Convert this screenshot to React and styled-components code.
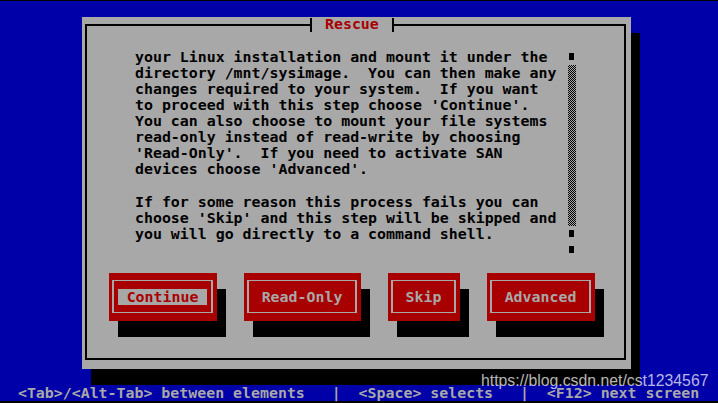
import React from 'react';
import styled, { createGlobalStyle } from 'styled-components';

const C = { blue: '#0000a8', grey: '#a8a8a8', red: '#a80000', black: '#000000' };
const MONO = '"DejaVu Sans Mono", "Liberation Mono", monospace';
const CELL_W = 8.975;
const CELL_H = 16.12;

const Global = createGlobalStyle`
  html, body { margin: 0; padding: 0; background: ${C.blue}; }
  body { width: 718px; height: 403px; overflow: hidden; }
`;

const Screen = styled.div`
  position: relative;
  width: 718px;
  height: 403px;
  box-sizing: border-box;
  background: ${C.blue};
  border-top: 1px solid ${C.black};
  border-bottom: 2px solid ${C.black};
  display: flex;
  flex-direction: column;
  font-family: ${MONO};
  font-size: 14.9px;
  font-weight: bold;
`;

const Window = styled.section`
  margin: 16px 0 0 82px;
  width: 549px;
  height: 352px;
  box-sizing: border-box;
  background: ${C.grey};
  box-shadow: 9px 16px 0 ${C.black};
  padding: 7px 5px 9px 3px;
  display: flex;
`;

const Frame = styled.div`
  position: relative;
  flex: 1;
  border: 2px solid ${C.black};
  display: flex;
  flex-direction: column;
`;

const TitleTab = styled.h1`
  position: absolute;
  top: -8px;
  left: 223px;
  margin: 0;
  height: 14px;
  box-sizing: border-box;
  padding: 0 13px;
  border-left: 2px solid ${C.black};
  border-right: 2px solid ${C.black};
  background: ${C.grey};
  color: ${C.red};
  font: inherit;
  line-height: 12px;
  white-space: pre;
`;

const Body = styled.div`
  display: flex;
  align-items: flex-start;
  margin-top: 22.5px;
  padding-left: 48px;
`;

const Message = styled.p`
  margin: 0;
  width: ${47 * CELL_W}px;
  white-space: pre;
  line-height: ${CELL_H}px;
  color: ${C.black};
`;

const Scrollbar = styled.div`
  margin-left: 11px;
  width: 8px;
  display: flex;
  flex-direction: column;
  align-items: center;
`;

const ScrollCell = styled.div`
  height: ${CELL_H}px;
  display: flex;
  align-items: center;
  justify-content: center;
`;

const ScrollBlock = styled.span`
  display: block;
  width: 5px;
  height: 7px;
  background: ${C.black};
`;

const ScrollTrack = styled.div`
  width: 8px;
  height: ${CELL_H * 10}px;
  background: repeating-conic-gradient(${C.black} 0 25%, ${C.grey} 0 50%) 0 0 / 2px 2px;
`;

const ButtonRow = styled.div`
  display: flex;
  gap: 27px;
  margin-top: 15px;
  padding-left: 22px;
`;

const Button = styled.button`
  width: ${(p) => Math.round(p.$cells * CELL_W)}px;
  height: 48px;
  box-sizing: border-box;
  margin: 0;
  border: 0;
  padding: 7px 4px 8px 3px;
  background: ${C.red};
  box-shadow: 9px 16px 0 ${C.black};
  display: flex;
  font: inherit;
  cursor: pointer;
`;

const ButtonFrame = styled.span`
  flex: 1;
  border-style: solid;
  border-color: ${C.grey};
  border-width: 1px 2px;
  display: flex;
  align-items: center;
  justify-content: center;
`;

const ButtonLabel = styled.span`
  height: 16px;
  line-height: 16px;
  padding: 0 ${CELL_W}px;
  white-space: pre;
  background: ${(p) => (p.$focused ? C.grey : 'transparent')};
  color: ${(p) => (p.$focused ? C.red : C.grey)};
`;

const StatusBar = styled.footer`
  margin-top: auto;
  height: 16px;
  line-height: 16px;
  color: ${C.grey};
  white-space: pre;
`;

const Watermark = styled.div`
  position: absolute;
  left: 481px;
  top: 372px;
  font-family: "Liberation Sans", Arial, sans-serif;
  font-weight: normal;
  font-size: 15.8px;
  line-height: 16px;
  color: rgba(255, 255, 255, 0.72);
  white-space: pre;
  pointer-events: none;
`;

const lines = [
  'your Linux installation and mount it under the',
  'directory /mnt/sysimage.  You can then make any',
  'changes required to your system.  If you want',
  "to proceed with this step choose 'Continue'.",
  'You can also choose to mount your file systems',
  'read-only instead of read-write by choosing',
  "'Read-Only'.  If you need to activate SAN",
  "devices choose 'Advanced'.",
  '',
  'If for some reason this process fails you can',
  "choose 'Skip' and this step will be skipped and",
  'you will go directly to a command shell.',
];

const buttons = [
  { label: 'Continue', focused: true },
  { label: 'Read-Only' },
  { label: 'Skip' },
  { label: 'Advanced' },
];

export default function App() {
  return (
    <>
      <Global />
      <Screen>
        <Window>
          <Frame>
            <TitleTab>Rescue</TitleTab>
            <Body>
              <Message>{lines.join('\n')}</Message>
              <Scrollbar>
                <ScrollCell><ScrollBlock /></ScrollCell>
                <ScrollTrack />
                <ScrollCell><ScrollBlock /></ScrollCell>
                <ScrollCell><ScrollBlock /></ScrollCell>
              </Scrollbar>
            </Body>
            <ButtonRow>
              {buttons.map((b) => (
                <Button key={b.label} $cells={b.label.length + 4}>
                  <ButtonFrame>
                    <ButtonLabel $focused={b.focused}>{b.label}</ButtonLabel>
                  </ButtonFrame>
                </Button>
              ))}
            </ButtonRow>
          </Frame>
        </Window>
        <StatusBar>{'  <Tab>/<Alt-Tab> between elements   |  <Space> selects   |  <F12> next screen'}</StatusBar>
        <Watermark>https://blog.csdn.net/cst1234567</Watermark>
      </Screen>
    </>
  );
}
